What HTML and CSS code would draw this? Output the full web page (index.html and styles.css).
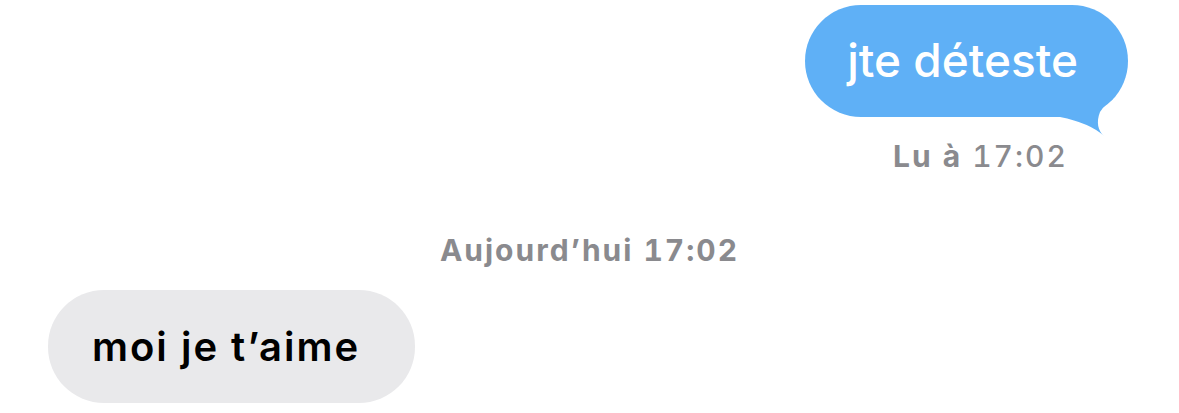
FILE: index.html
```html
<!DOCTYPE html>
<html lang="fr">
<head>
  <meta charset="UTF-8" />
  <meta name="viewport" content="width=device-width, initial-scale=1" />
  <title>Messages</title>
  <link rel="stylesheet" href="styles.css">
</head>
<body>

<div class="thread">
  <div class="row sent">
    <div class="bubble blue">
      jte déteste
      <svg class="tail" width="70" height="80" viewBox="1060 60 70 80">
        <path d="M1060 117 Q1090 123 1104 136 C1098 131 1096 122 1100 112 Q1105 104 1113 99 L1060 99 Z" fill="#5fb0f6"/>
      </svg>
    </div>
  </div>
  <div class="read"><strong>Lu à</strong> 17:02</div>

  <div class="stamp">Aujourd’hui 17:02</div>

  <div class="row received">
    <div class="bubble gray">moi je t’aime</div>
  </div>
</div>

</body>
</html>
```

FILE: styles.css
```css
body {
  margin: 0;
  background: #fff;
  font-family: Inter, "Noto Sans", sans-serif;
}

.thread {
  display: flex;
  flex-direction: column;
  padding-top: 5px;
}

.row {
  display: flex;
}

.sent {
  justify-content: flex-end;
  padding-right: 51px;
}

.received {
  padding-left: 48px;
}

.bubble {
  position: relative;
  border-radius: 56px;
  font-size: 46px;
  font-weight: 500;
}

.blue {
  background: #5fb0f6;
  color: #fff;
  height: 112px;
  line-height: 110px;
  padding: 0 50px 0 42px;
}

.tail {
  position: absolute;
  left: calc(100% - 68px);
  top: 55px;
}

.gray {
  background: #e9e9eb;
  color: #000;
  height: 113px;
  line-height: 113px;
  padding: 0 55px 0 44px;
  font-weight: 600;
  font-size: 40px;
  letter-spacing: 2px;
}

.read,
.stamp {
  font-size: 30px;
  color: #8a8a8e;
  letter-spacing: 2px;
  font-variant-numeric: tabular-nums;
}

.read {
  align-self: flex-end;
  margin-right: 111px;
  margin-top: 21px;
  font-weight: 500;
}

.read strong {
  font-weight: 700;
}

.stamp {
  align-self: center;
  margin-top: 58px;
  margin-bottom: 22px;
  font-weight: 700;
}
```
